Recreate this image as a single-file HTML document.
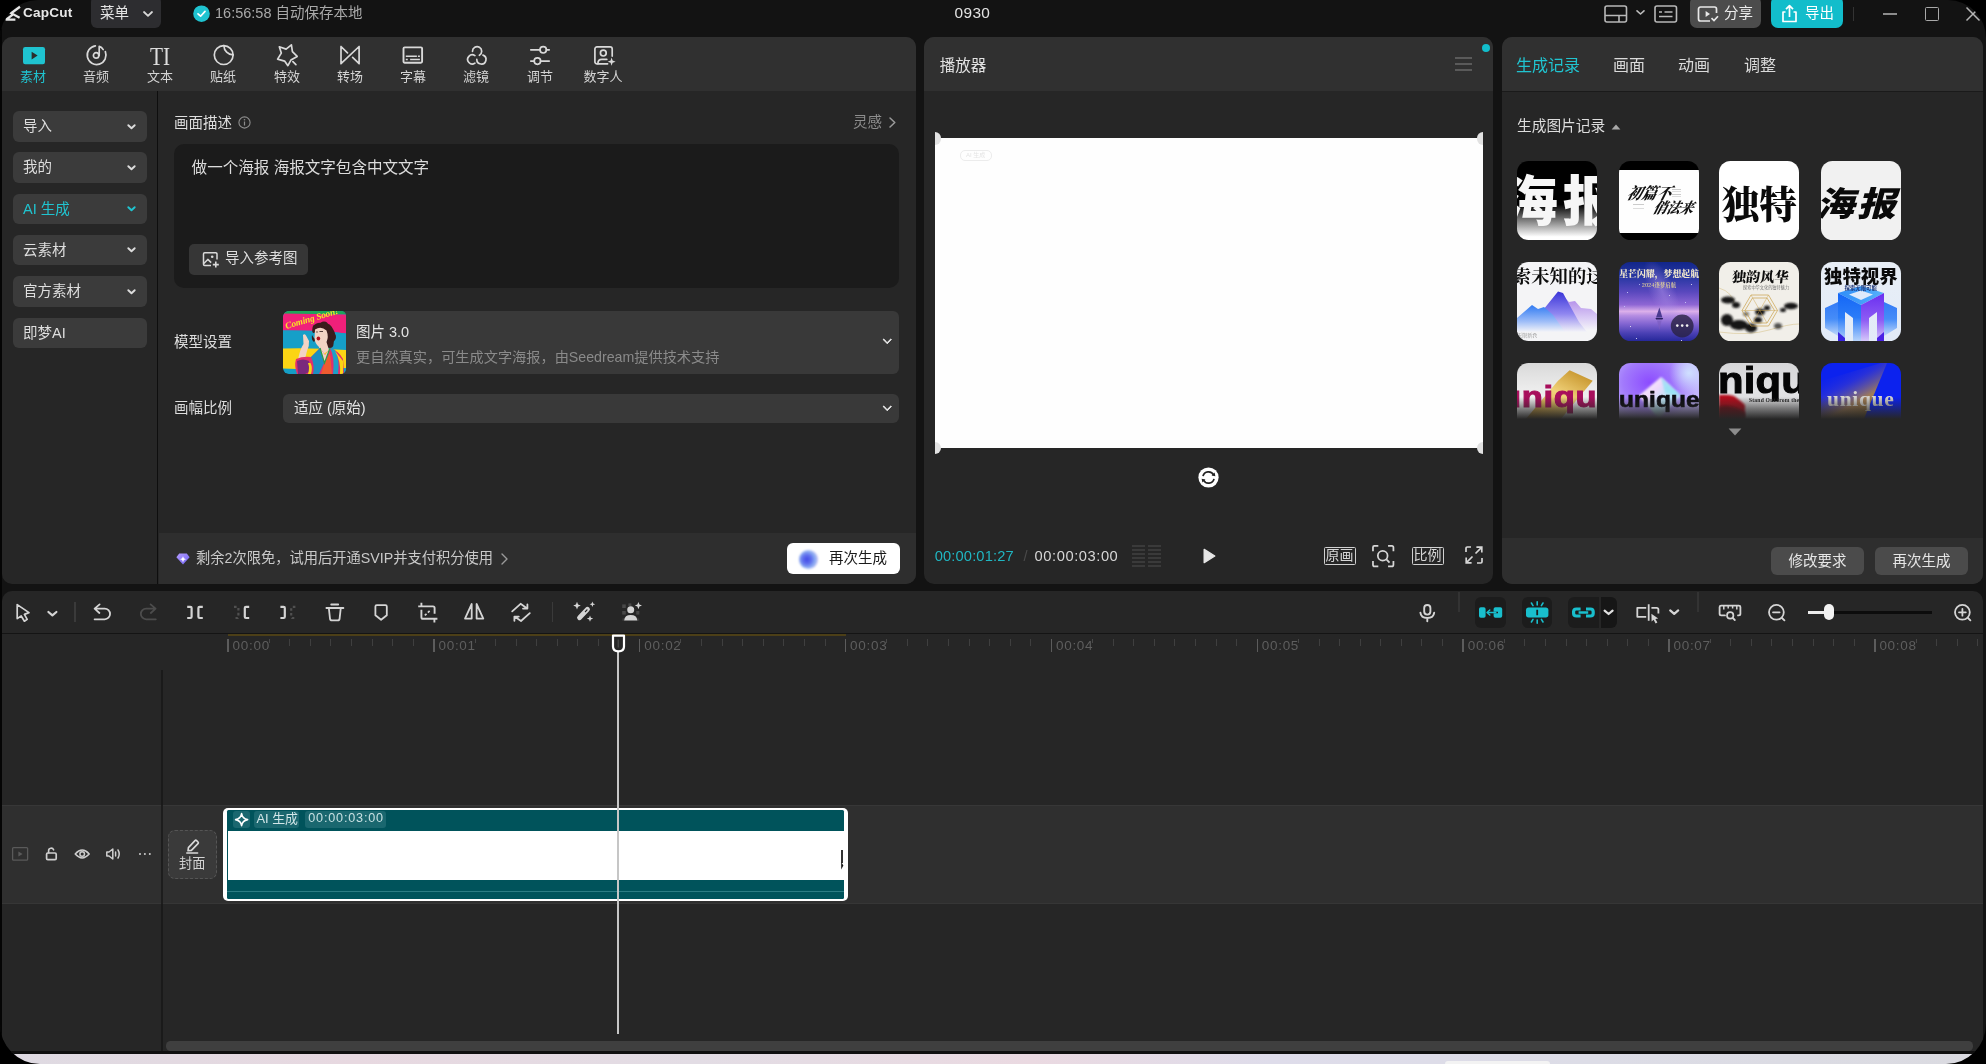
<!DOCTYPE html>
<html lang="zh-CN">
<head>
<meta charset="utf-8">
<title>CapCut</title>
<style>
*{box-sizing:border-box;margin:0;padding:0}
html,body{width:1986px;height:1064px;background:#fff;overflow:hidden}
body{font-family:"Liberation Sans","Noto Sans CJK SC",sans-serif;color:#dcdcdc;font-size:14px;-webkit-font-smoothing:antialiased}
#app{opacity:0.999;position:absolute;left:0;top:0;width:1986px;height:1064px;background:#000;overflow:hidden}
#win{position:absolute;left:0;top:0;width:1986px;height:1064px;background:#131313;border-radius:38px 38px 40px 40px;overflow:hidden}
.abs{position:absolute}
.t{position:absolute;white-space:nowrap;line-height:1}
svg{position:absolute;overflow:visible}
.panel{position:absolute;background:#262626;border-radius:10px;overflow:hidden}
.phead{position:absolute;left:0;top:-1px;right:0;height:54px;background:#303030}
.in{position:absolute;left:0;top:1px;width:100%;height:100%}
.teal{color:#20c4d0}

.tab{position:absolute;top:0;width:0;height:53px}
.tab span{position:absolute;left:-30px;width:60px;text-align:center;top:32px;font-size:13px;line-height:14px;color:#d4d4d4;white-space:nowrap}
.tab span.teal{color:#20c4d0}
.sb{position:absolute;left:11px;width:134px;height:30.6px;background:#3b3b3b;border-radius:6px;font-size:14.5px;line-height:30px;padding-left:10px;color:#dedede;white-space:nowrap}
.sb.teal{color:#20c4d0}
.sb i{position:absolute;right:13.2px;top:10.6px;width:5.4px;height:5.4px;border-right:2px solid #dadada;border-bottom:2px solid #dadada;transform:rotate(45deg);border-radius:0.5px}

.chev{position:absolute;width:6.5px;height:6.5px;border-right:2px solid #e0e0e0;border-bottom:2px solid #e0e0e0;transform:rotate(45deg);border-radius:0.5px}

.hd{width:12.4px;height:12.4px;background:#e2e2e2;border-radius:50%}
.bx{width:32px;height:18.6px;border:1.6px solid #d0d0d0;border-radius:1.5px;font-size:14px;line-height:15px;text-align:center;color:#d6d6d6;white-space:nowrap;letter-spacing:0}
.gb{width:93px;height:28px;background:#4b4b4b;border-radius:6px;font-size:14.5px;line-height:28px;text-align:center;color:#e6e6e6;white-space:nowrap}

.th{position:absolute;width:80.2px;height:79.4px;border-radius:11.5px;overflow:hidden}
.th.r3{height:57px;border-radius:11.5px 11.5px 0 0}
.th.r3::after{content:"";position:absolute;left:0;top:34px;width:100%;height:23px;background:linear-gradient(180deg,rgba(38,38,38,0) 0%,rgba(38,38,38,0.55) 50%,#262626 96%)}
/* sections get appended below */
</style>
</head>
<body>
<div id="app"><div id="win">
<!--TITLEBAR-->
<div class="abs" style="left:0;top:0;width:2px;height:1064px;background:#050505"></div>
<!-- title bar -->
<svg style="left:5px;top:6px" width="16" height="15" viewBox="0 0 16 15"><path d="M15 0.8 L6.2 7.2 L14.6 11.8 M0.6 13.7 L10.4 13.7 M1.4 13.4 L7.4 8.8" fill="none" stroke="#e6e6e6" stroke-width="2.3" stroke-linejoin="miter"/></svg>
<div class="t" style="left:23px;top:5.8px;font-size:13.6px;font-weight:700;color:#e8e8e8;letter-spacing:0.2px">CapCut</div>
<div class="abs" style="left:91px;top:-4px;width:70px;height:32px;background:#2d2d30;border-radius:6px"></div>
<div class="t" style="left:100px;top:6px;font-size:14.5px;color:#e4e4e4">菜单</div>
<svg style="left:143px;top:11px" width="10" height="6" viewBox="0 0 10 6"><path d="M1 1 L5 4.8 L9 1" fill="none" stroke="#d8d8d8" stroke-width="1.8" stroke-linecap="round" stroke-linejoin="round"/></svg>
<svg style="left:193px;top:5px" width="17" height="17" viewBox="0 0 17 17"><circle cx="8.5" cy="8.7" r="8.3" fill="#1fc3d0"/><path d="M5 8.8 L7.6 11.2 L12 6.4" fill="none" stroke="#fff" stroke-width="1.7" stroke-linecap="round" stroke-linejoin="round"/></svg>
<div class="t" style="left:215px;top:6px;font-size:14.5px;color:#a9a9a9">16:56:58 自动保存本地</div>
<div class="t" style="left:954.6px;top:5px;font-size:15.4px;color:#e2e2e2;letter-spacing:0.35px">0930</div>
<!-- right icons -->
<svg style="left:1604px;top:5px" width="24" height="18" viewBox="0 0 24 18"><rect x="1" y="1" width="21.5" height="16" rx="2" fill="none" stroke="#b8b8b8" stroke-width="1.6"/><path d="M1 10.5 H22.5 M15 10.5 V17" stroke="#b8b8b8" stroke-width="1.6" fill="none"/></svg>
<svg style="left:1636px;top:10px" width="9" height="5" viewBox="0 0 9 5"><path d="M1 0.8 L4.5 4 L8 0.8" fill="none" stroke="#bdbdbd" stroke-width="1.6" stroke-linecap="round" stroke-linejoin="round"/></svg>
<svg style="left:1654px;top:5px" width="24" height="18" viewBox="0 0 24 18"><rect x="1" y="1" width="21.5" height="16" rx="2" fill="none" stroke="#b8b8b8" stroke-width="1.6"/><path d="M5 7 H8 M10.5 7 H18.5 M5 11.5 H18.5" stroke="#b8b8b8" stroke-width="1.6" fill="none"/></svg>
<div class="abs" style="left:1690px;top:-4px;width:71px;height:32px;background:#4c4c4c;border-radius:7px"></div>
<svg style="left:1697px;top:5px" width="22" height="18" viewBox="0 0 22 18"><path d="M13 16 H3.5 a2 2 0 0 1 -2 -2 V4 a2 2 0 0 1 2 -2 H17.5 a2 2 0 0 1 2 2 V8" fill="none" stroke="#e8e8e8" stroke-width="1.7"/><path d="M8.6 6 L13 9 L8.6 12 Z" fill="#e8e8e8"/><path d="M14.5 13.2 L17 15.6 L21 11.2" fill="none" stroke="#e8e8e8" stroke-width="1.7"/></svg>
<div class="t" style="left:1724px;top:6px;font-size:14.5px;color:#ededed">分享</div>
<div class="abs" style="left:1771px;top:-4px;width:72px;height:32px;background:#12bdcb;border-radius:7px"></div>
<svg style="left:1781px;top:4px" width="17" height="19" viewBox="0 0 17 19"><path d="M4.5 8 H2 V17.5 H15 V8 H12.5" fill="none" stroke="#fff" stroke-width="1.7" stroke-linejoin="round"/><path d="M8.5 13 V2 M5 5.2 L8.5 1.6 L12 5.2" fill="none" stroke="#fff" stroke-width="1.7" stroke-linejoin="round"/></svg>
<div class="t" style="left:1805px;top:6px;font-size:14.5px;color:#fff">导出</div>
<div class="abs" style="left:1853px;top:7px;width:1px;height:14px;background:#333"></div>
<div class="abs" style="left:1883.4px;top:13px;width:14px;height:2px;background:#8c8c8c"></div>
<div class="abs" style="left:1925px;top:7px;width:14px;height:14px;border:1.8px solid #a9a9a9;border-radius:1.5px"></div>
<svg style="left:1966px;top:7px" width="14" height="14" viewBox="0 0 14 14"><path d="M0.5 0.5 L13.5 13.5 M13.5 0.5 L0.5 13.5" stroke="#b5b5b5" stroke-width="1.5"/></svg>
<!--/TITLEBAR-->
<!--LEFTPANEL-->
<div class="panel" id="lp" style="left:2px;top:37px;width:913.6px;height:547.4px"><div class="in">
 <div class="phead"></div>
 <!-- tabs -->
 <div class="tab" style="left:31px"><svg width="24" height="19" viewBox="0 0 24 19" style="left:-11px;top:8px"><rect x="1" y="1" width="22" height="17.2" rx="2.2" fill="#1fc3d0"/><path d="M9.6 5.8 L15.6 9.6 L9.6 13.4 Z" fill="#2b2b2b"/></svg><span class="teal">素材</span></div>
 <div class="tab" style="left:94px"><svg width="22" height="22" viewBox="0 0 22 22" style="left:-11px;top:6px"><path d="M10.35 1.8 A9.4 9.4 0 1 0 20.35 7.6" fill="none" stroke="#d9d9d9" stroke-width="1.7" stroke-linecap="round" stroke-linejoin="round"/><circle cx="11.1" cy="11.4" r="2.7" fill="none" stroke="#d9d9d9" stroke-width="1.7" stroke-linecap="round" stroke-linejoin="round"/><path d="M14.2 11.4 V2.4 Q16.8 3.2 18.2 5.6" fill="none" stroke="#d9d9d9" stroke-width="1.7" stroke-linecap="round" stroke-linejoin="round" stroke-width="1.9"/></svg><span>音频</span></div>
 <div class="tab" style="left:158px"><div class="t" style="left:-13px;top:6.5px;width:26px;text-align:center;font-family:'Liberation Serif',serif;font-size:24.5px;color:#dedede;transform:scaleX(0.87)">TI</div><span>文本</span></div>
 <div class="tab" style="left:221px"><svg width="22" height="22" viewBox="0 0 22 22" style="left:-11px;top:6px"><circle cx="11.7" cy="11.1" r="9.4" fill="none" stroke="#d9d9d9" stroke-width="1.7" stroke-linecap="round" stroke-linejoin="round"/><path d="M11.9 1.7 A9.4 9.4 0 0 0 21.1 10.9" fill="none" stroke="#d9d9d9" stroke-width="1.7" stroke-linecap="round" stroke-linejoin="round"/></svg><span>贴纸</span></div>
 <div class="tab" style="left:285px"><svg width="24" height="25" viewBox="0 0 24 25" style="left:-12px;top:4px"><path d="M16.4 2.8 L17.4 9.6 L22.2 14.4 L15.9 18.1 L12.9 23.7 L9.6 19.1 L2.6 17.1 L6.3 11.1 L4.3 4.8 L11.1 7.1 Z" fill="none" stroke="#d9d9d9" stroke-width="1.7" stroke-linecap="round" stroke-linejoin="round"/><path d="M17.9 19.7 L20.9 22.7" fill="none" stroke="#d9d9d9" stroke-width="1.7" stroke-linecap="round" stroke-linejoin="round"/></svg><span>特效</span></div>
 <div class="tab" style="left:348px"><svg width="22" height="20" viewBox="0 0 22 20" style="left:-11px;top:7px"><path d="M2 1.5 V18.7 L20.1 1.5 V18.7 L13.6 12.4 M2 1.5 L8.5 7.8" fill="none" stroke="#d9d9d9" stroke-width="1.7" stroke-linecap="round" stroke-linejoin="round" stroke-linecap="butt"/></svg><span>转场</span></div>
 <div class="tab" style="left:411px"><svg width="22" height="19" viewBox="0 0 22 19" style="left:-11px;top:8px"><rect x="1.5" y="1.4" width="18.6" height="15.4" rx="1.2" fill="none" stroke="#d9d9d9" stroke-width="1.9"/><path d="M3.8 10.2 H14.9 M15.9 10.2 H17.9 M3.8 13.4 H5.8 M8.1 13.4 H17.9" stroke="#d9d9d9" stroke-width="1.5"/></svg><span>字幕</span></div>
 <div class="tab" style="left:474px"><svg width="24" height="22" viewBox="0 0 24 22" style="left:-11px;top:6px"><path d="M7.5 7.3 A4.6 4.6 0 1 1 14.4 11.3 M9.94 11.63 A4.6 4.6 0 1 0 9.94 19.17 M11.8 15.4 A4.6 4.6 0 1 0 17.97 11.08" fill="none" stroke="#d9d9d9" stroke-width="1.7" stroke-linecap="round" stroke-linejoin="round"/></svg><span>滤镜</span></div>
 <div class="tab" style="left:538px"><svg width="20" height="21" viewBox="0 0 20 21" style="left:-10px;top:7px"><path d="M0.8 4.8 H10 M16.4 4.8 H19.2 M0.8 16.1 H4.2 M10.6 16.1 H19.2" fill="none" stroke="#d9d9d9" stroke-width="1.7" stroke-linecap="round" stroke-linejoin="round"/><circle cx="13.2" cy="4.8" r="3.2" fill="none" stroke="#d9d9d9" stroke-width="1.7" stroke-linecap="round" stroke-linejoin="round"/><circle cx="7.4" cy="16.1" r="3.2" fill="none" stroke="#d9d9d9" stroke-width="1.7" stroke-linecap="round" stroke-linejoin="round"/></svg><span>调节</span></div>
 <div class="tab" style="left:601px"><svg width="25" height="22" viewBox="0 0 25 22" style="left:-12px;top:6px"><path d="M16.6 19.8 H6 a2.1 2.1 0 0 1 -2.1 -2.1 V5 a2.1 2.1 0 0 1 2.1 -2.1 H19.1 a2.1 2.1 0 0 1 2.1 2.1 V12.1" fill="none" stroke="#d9d9d9" stroke-width="1.7" stroke-linecap="round" stroke-linejoin="round" stroke-linecap="butt" stroke-width="1.9"/><circle cx="12.3" cy="9.1" r="2.9" fill="none" stroke="#d9d9d9" stroke-width="1.7" stroke-linecap="round" stroke-linejoin="round"/><path d="M6.9 19.6 Q6.9 15.4 10.8 15.4 H15.8" fill="none" stroke="#d9d9d9" stroke-width="1.7" stroke-linecap="round" stroke-linejoin="round" stroke-linecap="butt"/><path d="M20.6 13.6 L21.6 16.6 L24.6 17.65 L21.6 18.7 L20.6 21.7 L19.6 18.7 L16.6 17.65 L19.6 16.6 Z" fill="#d9d9d9"/></svg><span>数字人</span></div>
 <!-- sidebar -->
 <div class="abs" style="left:154.8px;top:53px;width:1.3px;height:494px;background:#0e0e0e"></div>
 <div class="sb" style="top:73.0px">导入<svg width="9" height="6" viewBox="0 0 9 6" style="left:113.6px;top:12.6px"><path d="M1.3 1.2 L4.5 4.3 L7.7 1.2" fill="none" stroke="#dcdcdc" stroke-width="1.9" stroke-linecap="round" stroke-linejoin="round"/></svg></div>
 <div class="sb" style="top:114.3px">我的<svg width="9" height="6" viewBox="0 0 9 6" style="left:113.6px;top:12.6px"><path d="M1.3 1.2 L4.5 4.3 L7.7 1.2" fill="none" stroke="#dcdcdc" stroke-width="1.9" stroke-linecap="round" stroke-linejoin="round"/></svg></div>
 <div class="sb teal" style="top:155.6px">AI 生成<svg width="9" height="6" viewBox="0 0 9 6" style="left:113.6px;top:12.6px"><path d="M1.3 1.2 L4.5 4.3 L7.7 1.2" fill="none" stroke="#20c4d0" stroke-width="1.9" stroke-linecap="round" stroke-linejoin="round"/></svg></div>
 <div class="sb" style="top:196.9px">云素材<svg width="9" height="6" viewBox="0 0 9 6" style="left:113.6px;top:12.6px"><path d="M1.3 1.2 L4.5 4.3 L7.7 1.2" fill="none" stroke="#dcdcdc" stroke-width="1.9" stroke-linecap="round" stroke-linejoin="round"/></svg></div>
 <div class="sb" style="top:238.2px">官方素材<svg width="9" height="6" viewBox="0 0 9 6" style="left:113.6px;top:12.6px"><path d="M1.3 1.2 L4.5 4.3 L7.7 1.2" fill="none" stroke="#dcdcdc" stroke-width="1.9" stroke-linecap="round" stroke-linejoin="round"/></svg></div>
 <div class="sb" style="top:279.6px">即梦AI</div>
 <!--LEFTMAIN-->
 <div class="t" style="left:172px;top:77.7px;font-size:14.5px;color:#dedede">画面描述</div>
 <svg style="left:236px;top:78px" width="13" height="13" viewBox="0 0 13 13"><circle cx="6.5" cy="6.5" r="5.6" fill="none" stroke="#8c8c8c" stroke-width="1.1"/><path d="M6.5 5.6 V9.6" stroke="#8c8c8c" stroke-width="1.2"/><circle cx="6.5" cy="3.7" r="0.8" fill="#8c8c8c"/></svg>
 <div class="t" style="left:851px;top:77px;font-size:14.5px;color:#8e8e8e">灵感</div>
 <svg style="left:887px;top:79px" width="7" height="11" viewBox="0 0 7 11"><path d="M1 1 L5.8 5.5 L1 10" fill="none" stroke="#9a9a9a" stroke-width="1.5" stroke-linecap="round" stroke-linejoin="round"/></svg>
 <div class="abs" style="left:172px;top:105.6px;width:725px;height:144.2px;background:#1b1b1b;border-radius:10px"></div>
 <div class="t" style="left:189.6px;top:121.9px;font-size:15.55px;color:#dcdcdc">做一个海报 海报文字包含中文文字</div>
 <div class="abs" style="left:187px;top:206.2px;width:119px;height:30.6px;background:#363636;border-radius:5px"></div>
 <svg style="left:200px;top:213px" width="18" height="17" viewBox="0 0 18 17"><path d="M15 8.5 V3 a1.2 1.2 0 0 0 -1.2 -1.2 H2.7 a1.2 1.2 0 0 0 -1.2 1.2 V13.3 a1.2 1.2 0 0 0 1.2 1.2 H9" fill="none" stroke="#d9d9d9" stroke-width="1.5"/><path d="M1.8 12.6 L5.8 8.4 L9.2 11.6" fill="none" stroke="#d9d9d9" stroke-width="1.5" stroke-linejoin="round"/><circle cx="10.2" cy="5.8" r="1.3" fill="#d9d9d9"/><path d="M13.8 10.6 V16.6 M10.8 13.6 H16.8" stroke="#d9d9d9" stroke-width="1.6"/></svg>
 <div class="t" style="left:223px;top:213px;font-size:14.5px;color:#dedede">导入参考图</div>
 <!-- model -->
 <div class="t" style="left:172px;top:297px;font-size:14.5px;color:#dedede">模型设置</div>
 <div class="abs" style="left:281px;top:273px;width:616px;height:62.6px;background:#393939;border-radius:6px;overflow:hidden">
  <!--MODELTHUMB-->
  <div class="abs" style="left:0;top:0;width:63px;height:63px;border-radius:5px;overflow:hidden;background:#159ec6">
   <svg width="63" height="63" viewBox="0 0 63 63" style="left:0;top:0">
    <rect width="63" height="3.5" fill="#1ea55a"/>
    <path d="M0 2.5 L63 3.4 V22.5 Q40 19 0 19.5 Z" fill="#f0207a"/>
    <path d="M0 19.5 Q40 19 63 22.5 V39 Q30 36.5 0 37.4 Z" fill="#169fc8"/>
    <path d="M0 37.4 Q30 36.5 63 39 V57 Q30 59 0 57.4 Z" fill="#fbd414"/>
    <!-- hair -->
    <path d="M30 16 Q33 10.5 40 12 Q47 11 50 18 Q54 24 51 30 Q50 36 45 36 L44 28 Q38 16 31 22 Q28 22 30 16 Z" fill="#3a1c1c"/>
    <path d="M29 24 Q30 27 33 28 L31 31 Q28 29 29 24 Z" fill="#3a1c1c"/><circle cx="48" cy="26" r="5" fill="#3a1c1c"/><circle cx="46.5" cy="33" r="4" fill="#3a1c1c"/><circle cx="33" cy="17" r="3.4" fill="#3a1c1c"/><circle cx="41" cy="14.5" r="4" fill="#3a1c1c"/>
    <!-- face/neck -->
    <path d="M32 18.5 Q38 14.5 43.5 19.5 Q46 26 43.5 31 L46 39 L38 45 L36 36 Q32 33 31.5 27 Z" fill="#f2d3c4"/>
    <ellipse cx="35.4" cy="27.4" rx="1.8" ry="2" fill="#b0101e"/>
    <path d="M36.5 20.5 H40 M33.2 21 H34.8" stroke="#2a1616" stroke-width="0.8"/>
    <!-- arm + hand -->
    <path d="M20 24 Q21.5 22.5 23 24.5 L26 30 Q26.5 35 24 40 L21.5 50 L15 49 Q17 38 20.5 33 Z" fill="#f2d3c4"/>
    <!-- dress -->
    <path d="M13 48 Q20 45 28 46 L37 37 L42 44 L47 37 Q56 40 60 48 L61 63 H14 Q11 55 13 48 Z" fill="#e2306c"/>
    <path d="M37 37 L41.5 52 L47 37 L42 44 Z" fill="#f2d3c4"/>
    <path d="M28 46 L37 37 L41 52 L36 63 H30 Q32 54 28 46 Z" fill="#1c8fc0"/>
    <path d="M47 37 Q52 46 50 63 H55 Q57 48 52 39 Z" fill="#1ea0c8"/>
    <path d="M14 50 Q20 47 26 50 L28 60 L22 63 H15 Z" fill="#7a2a7c"/>
    <path d="M25 52 Q27 57 25 63 H28 Q30 57 27.5 52 Z M52 40 Q58 50 57 63 H60 L60 50 Z" fill="#fbd414"/>
    <path d="M41.5 52 L47 42 L49 63 H38 Z" fill="#f0602a" opacity="0.9"/>
    <path d="M37 37 L41.5 52 L47 37" fill="none" stroke="#2aa04a" stroke-width="1.2"/>
   </svg>
   <div class="t" style="left:3.5px;top:10.6px;font-size:9.3px;font-weight:700;font-style:italic;color:#f7e326;font-family:'Liberation Serif',serif;letter-spacing:-0.1px;transform:rotate(-16.5deg);transform-origin:0 100%">Coming Soon!</div>
  </div>
  <!--/MODELTHUMB-->
 </div>
 <div class="t" style="left:354px;top:287px;font-size:14.5px;color:#e4e4e4">图片 3.0</div>
 <div class="t" style="left:354px;top:312px;font-size:14.2px;color:#8a8a8a">更自然真实，可生成文字海报，由Seedream提供技术支持</div>
 <i class="chev" style="left:882px;top:298px"></i>
 <div class="t" style="left:172px;top:363px;font-size:14.5px;color:#dedede">画幅比例</div>
 <div class="abs" style="left:281px;top:355.6px;width:616px;height:29px;background:#393939;border-radius:6px"></div>
 <div class="t" style="left:292px;top:363px;font-size:14.5px;color:#e4e4e4">适应 (原始)</div>
 <i class="chev" style="left:882px;top:365.4px"></i>
 <!-- bottom bar -->
 <div class="abs" style="left:156.5px;top:494.6px;width:758px;height:53px;background:#2e2e2e"></div>
 <svg style="left:174px;top:515px" width="14" height="12" viewBox="0 0 14 12"><defs><linearGradient id="dg" x1="0" y1="0" x2="1" y2="1"><stop offset="0" stop-color="#b49cff"/><stop offset="1" stop-color="#6f63f2"/></linearGradient></defs><path d="M3.2 0.6 H10.8 L13.6 4.2 L7 11.4 L0.4 4.2 Z" fill="url(#dg)"/><path d="M7 3.2 L7.9 5.3 L10 6.2 L7.9 7.1 L7 9.2 L6.1 7.1 L4 6.2 L6.1 5.3 Z" fill="#fff"/></svg>
 <div class="t" style="left:194px;top:513px;font-size:14.25px;color:#c9c9c9">剩余2次限免，试用后开通SVIP并支付积分使用</div>
 <svg style="left:499px;top:515px" width="7" height="12" viewBox="0 0 7 12"><path d="M1 1 L6 6 L1 11" fill="none" stroke="#9a9a9a" stroke-width="1.4" stroke-linecap="round" stroke-linejoin="round"/></svg>
 <div class="abs" style="left:785px;top:504.8px;width:112.6px;height:31px;background:#fff;border-radius:6px"></div>
 <div class="abs" style="left:796.5px;top:511.5px;width:19px;height:19px;border-radius:50%;background:radial-gradient(circle at 42% 50%,#4048e6 0%,#6272ee 32%,#8fb2f2 58%,#cdb9f4 80%,rgba(255,255,255,0) 100%);filter:blur(0.8px)"></div>
 <div class="t" style="left:827px;top:513px;font-size:14.5px;color:#1a1a1a">再次生成</div>
 <!--/LEFTMAIN-->
</div></div>
<!--/LEFTPANEL-->
<!--PLAYER-->
<div class="panel" id="pp" style="left:923.8px;top:37px;width:569.7px;height:547.4px"><div class="in">
 <div class="phead"></div>
 <div class="t" style="left:16px;top:20px;font-size:15.5px;color:#e2e2e2">播放器</div>
 <div class="abs" style="left:531px;top:19px;width:17px;height:2px;background:#5a5a5a;box-shadow:0 6px 0 #5a5a5a,0 12px 0 #5a5a5a"></div>
 <div class="abs" style="left:558.3px;top:5.8px;width:8px;height:8px;border-radius:50%;background:#12bdcb"></div>
 <!-- canvas -->
 <div class="abs" style="left:10.9px;top:94.2px;width:548.5px;height:321.9px;overflow:hidden">
  <div class="abs" style="left:0;top:6.2px;width:548.5px;height:309.5px;background:#fefefe"></div>
  <div class="abs hd" style="left:-6.2px;top:0"></div><div class="abs hd" style="left:542.3px;top:0"></div>
  <div class="abs hd" style="left:-6.2px;top:309.5px"></div><div class="abs hd" style="left:542.3px;top:309.5px"></div>
  <div class="abs" style="left:25px;top:17.5px;width:32px;height:11px;border:1px solid #ececec;border-radius:5px;font-size:6px;line-height:8px;color:#e4e4e4;text-align:center">AI 生成</div>
 </div>
 <svg style="left:274.4px;top:428.8px" width="21" height="21" viewBox="0 0 22 22"><circle cx="11" cy="11" r="10.6" fill="#fff"/><path d="M5.2 9.6 A6 6 0 0 1 16.4 8.4 M16.8 12.4 A6 6 0 0 1 5.6 13.6" fill="none" stroke="#222" stroke-width="1.8"/><path d="M14.2 8.8 L18.2 9.6 L17.4 5.8 Z M7.8 13.2 L3.8 12.4 L4.6 16.2 Z" fill="#222"/></svg>
 <!-- controls -->
 <div class="t" style="left:11px;top:511px;font-size:14.7px;color:#20b6c2;letter-spacing:0.12px">00:00:01:27</div>
 <div class="t" style="left:99.6px;top:511px;font-size:14.7px;color:#4a4a4a">/</div>
 <div class="t" style="left:110.8px;top:511px;font-size:14.7px;color:#d6d6d6;letter-spacing:0.56px">00:00:03:00</div>
 <div class="abs" style="left:208px;top:507px;width:13px;height:2px;background:#3a3a3a;box-shadow:0 4px 0 #3a3a3a,0 8px 0 #3a3a3a,0 12px 0 #3a3a3a,0 16px 0 #3a3a3a,0 20px 0 #3a3a3a,16px 0 0 #3a3a3a,16px 4px 0 #3a3a3a,16px 8px 0 #3a3a3a,16px 12px 0 #3a3a3a,16px 16px 0 #3a3a3a,16px 20px 0 #3a3a3a"></div>
 <svg style="left:279.2px;top:510.4px" width="13" height="16" viewBox="0 0 13 16"><path d="M1.2 1.4 L11.8 8 L1.2 14.6 Z" fill="#e6e6e6" stroke="#e6e6e6" stroke-width="1.4" stroke-linejoin="round"/></svg>
 <div class="abs bx" style="left:399.8px;top:508.6px">原画</div>
 <svg style="left:448.6px;top:506.6px" width="22.4" height="22.4" viewBox="0 0 23 23"><path d="M1 6.5 V2.4 a1.4 1.4 0 0 1 1.4 -1.4 H6.5 M16.5 1 H20.6 a1.4 1.4 0 0 1 1.4 1.4 V6.5 M22 16.5 V20.6 a1.4 1.4 0 0 1 -1.4 1.4 H16.5 M6.5 22 H2.4 a1.4 1.4 0 0 1 -1.4 -1.4 V16.5" fill="none" stroke="#d6d6d6" stroke-width="1.8"/><circle cx="11" cy="11" r="5" fill="none" stroke="#d6d6d6" stroke-width="1.8"/><path d="M14.8 14.8 L18 18" stroke="#d6d6d6" stroke-width="1.8"/></svg>
 <div class="abs bx" style="left:487.8px;top:508.6px">比例</div>
 <svg style="left:541px;top:508px" width="18" height="18" viewBox="0 0 18 18"><path d="M1 6 V2.2 a1.2 1.2 0 0 1 1.2 -1.2 H6 M12 17 H15.8 a1.2 1.2 0 0 0 1.2 -1.2 V12" fill="none" stroke="#d6d6d6" stroke-width="1.7"/><path d="M10.5 7.5 L16.6 1.4 M11.4 1.2 H16.8 V6.6 M7.5 10.5 L1.4 16.6 M1.2 11.4 V16.8 H6.6" fill="none" stroke="#d6d6d6" stroke-width="1.7"/></svg>
</div></div>
<!--/PLAYER-->
<!--RIGHTPANEL-->
<div class="panel" id="rp" style="left:1502px;top:37px;width:481px;height:547.4px"><div class="in">
 <div class="phead" style="height:55.2px;border-bottom:1.5px solid #1a1a1a"></div>
 <div class="t teal" style="left:14px;top:19.6px;font-size:16px">生成记录</div>
 <div class="t" style="left:111px;top:19.6px;font-size:16px;color:#dadada">画面</div>
 <div class="t" style="left:176px;top:19.6px;font-size:16px;color:#dadada">动画</div>
 <div class="t" style="left:242px;top:19.6px;font-size:16px;color:#dadada">调整</div>
 <div class="t" style="left:15px;top:80.8px;font-size:14.7px;color:#dedede">生成图片记录</div>
 <svg style="left:109px;top:86px" width="10" height="6" viewBox="0 0 10 6"><path d="M5 0.6 L9.4 5.4 H0.6 Z" fill="#a8a8a8"/></svg>
 <svg style="left:226px;top:390px" width="14" height="8" viewBox="0 0 14 8"><path d="M0.6 0.6 H13.4 L7 7.6 Z" fill="#8c8c8c"/></svg>
 <!--THUMBS-->
 <!-- row 1 -->
 <div class="th" style="left:15.3px;top:123px;background:linear-gradient(180deg,#000 0%,#000 55%,#fff 96%)"><div class="t" style="left:-13.5px;top:10px;font-size:54px;font-weight:900;color:#f6f6f6;letter-spacing:5px;font-family:'Noto Sans CJK SC',sans-serif">海报</div></div>
 <div class="th" style="left:116.7px;top:123px;background:#000"><div class="abs" style="left:0;top:8.5px;width:80px;height:63.5px;background:#fefefe"></div>
  <div class="t" style="left:9.5px;top:23.5px;font-size:14.5px;font-weight:900;font-style:italic;color:#111;font-family:'Noto Serif CJK SC',serif;transform:skewX(-16deg) scaleY(1.12)">初篇不</div>
  <div class="t" style="left:35px;top:38.5px;font-size:13.4px;font-weight:900;font-style:italic;color:#111;font-family:'Noto Serif CJK SC',serif;transform:skewX(-16deg) scaleY(1.1)">俏法来</div>
  <div class="abs" style="left:53px;top:28px;width:9px;height:1px;background:#ccc;box-shadow:0 2px 0 #ddd,0 5px 0 #ccc,0 7px 0 #ddd"></div>
  <div class="abs" style="left:14px;top:43px;width:11px;height:1px;background:#ccc;box-shadow:0 4px 0 #ddd"></div>
 </div>
 <div class="th" style="left:217px;top:123px;background:#fff"><div class="t" style="left:2.8px;top:22.6px;font-size:37.5px;font-weight:900;color:#0a0a0a;font-family:'Noto Serif CJK SC',serif">独特</div></div>
 <div class="th" style="left:318.5px;top:123px;background:#f1f1f1"><div class="t" style="left:-0.5px;top:21px;font-size:38.5px;font-weight:900;color:#0a0a0a;letter-spacing:2.6px;font-family:'Noto Sans CJK SC',sans-serif;transform:skewX(-15deg) scaleY(0.88)">海报</div></div>
 <!-- row 2 -->
 <div class="th" style="left:15.3px;top:223.5px;background:#f4f4f6">
  <svg width="80" height="80" viewBox="0 0 80 80" style="left:0;top:0"><defs>
   <linearGradient id="m1" x1="0" y1="0" x2="0" y2="1"><stop offset="0" stop-color="#3a35d8"/><stop offset="0.55" stop-color="#8f86f0"/><stop offset="1" stop-color="#f4f4f8"/></linearGradient>
   <linearGradient id="m2" x1="0" y1="0" x2="0" y2="1"><stop offset="0" stop-color="#2f7af2"/><stop offset="0.6" stop-color="#9cbcf8"/><stop offset="1" stop-color="#f4f4f8"/></linearGradient>
   <linearGradient id="m3" x1="0" y1="0" x2="0" y2="1"><stop offset="0" stop-color="#a87de6"/><stop offset="0.7" stop-color="#ddd0f6"/><stop offset="1" stop-color="#f4f4f8"/></linearGradient></defs>
   <path d="M44 32 L52 40 L58 39 L64 46 L74 47 L80 52 V68 H40 Z" fill="url(#m3)"/>
   <path d="M18 58 L41 29.5 L46 31 L52 42 L62 60 L70 70 H10 Z" fill="url(#m1)"/>
   <path d="M0 56 L15 43 L21 47 L27 45 L36 53 L48 70 H0 Z" fill="url(#m2)"/>
  </svg>
  <div class="t" style="left:-4.5px;top:4px;font-size:18.3px;font-weight:700;color:#0c0c0c;letter-spacing:0.1px;font-family:'Noto Serif CJK SC',serif">索未知的这</div>
  <div class="t" style="left:0px;top:70px;font-size:5px;color:#999;font-family:'Noto Serif CJK SC',serif">无限新我</div>
 </div>
 <div class="th" style="left:116.7px;top:223.5px;background:linear-gradient(180deg,#12268a 0%,#2a38a4 20%,#5a48be 38%,#8e66d4 54%,#dcb0ea 62.5%,#b48ce2 68%,#8466d2 78%,#4a40b4 90%,#26289a 100%)">
  <div class="abs" style="left:30px;top:-6px;width:26px;height:70px;background:radial-gradient(ellipse at center,rgba(170,140,230,0.55) 0%,rgba(150,120,220,0) 70%);transform:rotate(-24deg)"></div>
  <div class="abs" style="left:0;top:0;width:1px;height:1px;background:#fff;border-radius:50%;box-shadow:8px 30px 0 #dfe4ff,20px 22px 0 #c8d0ff,72px 22px 0 #fff,66px 40px 0 #d8dcff,11px 64px 0 #fff,17px 76px 0 #fff,62px 78px 0 #fff,63px 79px 0 #fff,5px 44px 0 #c8d0ff,50px 33px 0 #e8e8ff,35px 12px 0 #c8d0ff,60px 8px 0 #c0c8ff"></div>
  <svg width="80" height="80" viewBox="0 0 80 80" style="left:0;top:0"><path d="M40.4 45.6 L43.4 55.4 H37 Z" fill="#4a3a90"/><path d="M36.4 56 H44.2 L43.4 57.4 H37.2 Z" fill="#2a2060"/><path d="M40.4 68 L42.6 58.6 H38 Z" fill="#7a5cc0" opacity="0.7"/><circle cx="63.2" cy="64" r="11.4" fill="#2a2244" opacity="0.82"/><circle cx="58.3" cy="63.6" r="1.3" fill="#f0f0f0"/><circle cx="63.2" cy="63.6" r="1.3" fill="#f0f0f0"/><circle cx="68.1" cy="63.6" r="1.3" fill="#f0f0f0"/></svg>
  <div class="t" style="left:0.5px;top:8.5px;font-size:8.9px;font-weight:900;color:#efe6cc;font-family:'Noto Serif CJK SC',serif">星芒闪耀，梦想起航</div>
  <div class="t" style="left:23px;top:21.5px;font-size:5.4px;font-weight:700;color:#d8c89a;font-family:'Noto Serif CJK SC',serif">2024逐梦启航</div>
 </div>
 <div class="th" style="left:217px;top:223.5px;background:#f1efe9">
  <svg width="80" height="80" viewBox="0 0 80 80" style="left:0;top:0"><defs><filter id="bl"><feGaussianBlur stdDeviation="1.3"/></filter></defs>
   <path d="M0 26 Q14 30 16 44 M0 70 Q30 74 50 68 T80 62" fill="none" stroke="#d9c58f" stroke-width="0.6"/>
   <g filter="url(#bl)" fill="#161616"><ellipse cx="9" cy="38" rx="7" ry="3.4"/><ellipse cx="17" cy="43" rx="4" ry="3"/><ellipse cx="8" cy="58" rx="6" ry="6"/><ellipse cx="20" cy="63" rx="9" ry="5"/><ellipse cx="32" cy="66" rx="6" ry="4.4"/><ellipse cx="41" cy="50" rx="5" ry="3.4"/><ellipse cx="48" cy="46" rx="3" ry="2.4"/><ellipse cx="39" cy="58" rx="4" ry="3"/><ellipse cx="72" cy="44" rx="7" ry="3.2"/><ellipse cx="64" cy="48" rx="3" ry="2"/><ellipse cx="59" cy="64" rx="4" ry="3" opacity="0.7"/><ellipse cx="27" cy="52" rx="3" ry="2" opacity="0.6"/></g>
   <g fill="none" stroke="#c9a04a" stroke-width="0.7"><path d="M32 33 H49.5 L58.5 48.5 L49.5 64 H32 L23 48.5 Z"/><path d="M33.5 36 H48 L55.5 48.5 L48 61 H33.5 L26 48.5 Z"/><path d="M32 33 L48 61 M49.5 33 L33.5 61 M23 48.5 H58.5" stroke-width="0.45"/></g>
  </svg>
  <div class="t" style="left:12.5px;top:7px;font-size:14.2px;font-weight:900;color:#0d0d0d;font-family:'Noto Serif CJK SC',serif;transform:skewX(-6deg)">独韵风华</div>
  <div class="t" style="left:24px;top:24.5px;font-size:4.2px;color:#777">探索中华文化的独特魅力</div>
 </div>
 <div class="th" style="left:318.5px;top:223.5px;background:linear-gradient(180deg,#e8eef6 0%,#e2ebf8 100%)">
  <svg width="80" height="80" viewBox="0 0 80 80" style="left:0;top:0"><defs>
   <linearGradient id="c1" x1="0" y1="0" x2="0" y2="1"><stop offset="0" stop-color="#1466f6"/><stop offset="0.5" stop-color="#2a7cf8"/><stop offset="1" stop-color="#bcd6fb"/></linearGradient>
   <linearGradient id="c2" x1="0" y1="0" x2="0" y2="1"><stop offset="0" stop-color="#6a2ef0"/><stop offset="0.55" stop-color="#8d5cf4"/><stop offset="1" stop-color="#d9ccfb"/></linearGradient>
   <linearGradient id="c3" x1="0" y1="0" x2="1" y2="0"><stop offset="0" stop-color="#2e8df8"/><stop offset="1" stop-color="#57b1fb"/></linearGradient></defs>
   <path d="M4 46 L17 40 V74 L4 66 Z M76 46 L63 40 V74 L76 66 Z" fill="url(#c1)" opacity="0.85"/>
   <path d="M17 31 L40 24 L63 31 L40 43 Z" fill="url(#c3)"/>
   <path d="M28 32.5 L40 28.5 L52 32.5 L40 38 Z" fill="#dfeafb"/>
   <path d="M17 31 L40 43 V80 H32 V56 L24 50 V80 H17 Z" fill="url(#c1)"/>
   <path d="M63 31 L40 43 V80 H48 V56 L56 50 V80 H63 Z" fill="url(#c2)"/>
   <path d="M17 80 V70 L24 76 V80 Z" fill="#3a24e0"/><path d="M63 80 V70 L56 76 V80 Z" fill="#4a22e4"/>
  </svg>
  <div class="t" style="left:3.5px;top:4px;font-size:18.4px;font-weight:900;color:#0b0b0b;font-family:'Noto Sans CJK SC',sans-serif">独特视界</div>
  <div class="t" style="left:24px;top:24.5px;font-size:5.4px;font-weight:700;color:#223a7a">探索无限可能</div>
 </div>
 <!-- row 3 -->
 <div class="th r3" style="left:15.3px;top:324.8px;background:linear-gradient(180deg,#d9d9d9 0%,#ececec 45%,#f4f4f4 100%)">
  <svg width="80" height="57" viewBox="0 0 80 57" style="left:0;top:0"><defs><linearGradient id="gd" x1="0.9" y1="0" x2="0.2" y2="1"><stop offset="0" stop-color="#c18d22"/><stop offset="0.5" stop-color="#f1d27a"/><stop offset="1" stop-color="#c99a36"/></linearGradient></defs><path d="M52.6 7.2 L75.7 17.8 L43 57 H8 L40.8 18 Z" fill="url(#gd)"/></svg>
  <div class="t" style="left:-17px;top:19.3px;font-size:30px;font-weight:700;color:#a80f5c;letter-spacing:0.6px;transform:scaleX(1.15);transform-origin:0 50%;-webkit-text-stroke:1px #a80f5c">unique</div>
 </div>
 <div class="th r3" style="left:116.7px;top:324.8px;background:radial-gradient(ellipse 60% 70% at 38% 34%,#8c4cff 0%,#a27afc 55%,#c2b4fd 100%)">
  <div class="abs" style="left:50px;top:-10px;width:40px;height:40px;background:radial-gradient(circle,#cfe0ff 0%,rgba(200,215,255,0) 70%)"></div>
  <svg width="80" height="57" viewBox="0 0 80 57" style="left:0;top:0"><defs><linearGradient id="cr" x1="0" y1="0" x2="1" y2="1"><stop offset="0" stop-color="#fff"/><stop offset="0.35" stop-color="#f0d8fb"/><stop offset="0.6" stop-color="#b7e6f6"/><stop offset="1" stop-color="#c9a8f6"/></linearGradient><filter id="b2"><feGaussianBlur stdDeviation="0.9"/></filter></defs><path d="M42 14 L62 33 L40 56 L19.5 33 Z" fill="url(#cr)" filter="url(#b2)"/><path d="M42 14 L62 33 L46 30 Z" fill="#8fe3f4" opacity="0.75" filter="url(#b2)"/></svg>
  <div class="t" style="left:0px;top:26.4px;font-size:21.6px;font-weight:700;color:#0c0c12;letter-spacing:0.1px;transform:scaleX(1.13);transform-origin:0 50%;-webkit-text-stroke:0.6px #0c0c12">unique</div>
 </div>
 <div class="th r3" style="left:217px;top:324.8px;background:linear-gradient(180deg,#d6d6d8 0%,#e2e2e4 50%,#d2d2d4 100%)">
  <svg width="80" height="57" viewBox="0 0 80 57" style="left:0;top:0"><defs><filter id="b3"><feGaussianBlur stdDeviation="0.8"/></filter></defs><path d="M0 32 Q8 31 15 33 Q22 38 26 42 V57 H0 Z" fill="#b5101c" filter="url(#b3)"/><path d="M0 44 Q12 40 26 50 V57 H0 Z" fill="#7a0c14" filter="url(#b3)"/></svg>
  <div class="t" style="left:-1.5px;top:-0.6px;font-size:37px;font-weight:700;color:#050505;letter-spacing:0.2px;transform:scaleX(1.13);transform-origin:0 50%;-webkit-text-stroke:1px #050505">niqu</div>
  <div class="t" style="left:30px;top:35.5px;font-size:5.6px;font-weight:700;color:#222;font-family:'Liberation Serif',serif;letter-spacing:0.2px">Stand Out from the</div>
 </div>
 <div class="th r3" style="left:318.5px;top:324.8px;background:#0c22ee">
  <svg width="80" height="57" viewBox="0 0 80 57" style="left:0;top:0"><defs><linearGradient id="wg" x1="0.15" y1="0.1" x2="0.7" y2="0.95"><stop offset="0" stop-color="#0c22ee" stop-opacity="0"/><stop offset="0.35" stop-color="#3a3acc" stop-opacity="0.6"/><stop offset="0.7" stop-color="#a07c58"/><stop offset="1" stop-color="#8a6a2c"/></linearGradient></defs><path d="M66 0 L42.5 57 H0 V18 L60 0 Z" fill="url(#wg)"/></svg>
  <div class="t" style="left:6.6px;top:26.6px;font-size:21.5px;font-weight:700;color:#d6d4d0;letter-spacing:0.65px;font-family:'Liberation Serif',serif">unique</div>
 </div>
 <!--/THUMBS-->
 <div class="abs" style="left:0;top:500px;width:481px;height:46px;background:#2e2e2e"></div>
 <div class="abs gb" style="left:269px;top:508.6px">修改要求</div>
 <div class="abs gb" style="left:373px;top:508.6px">再次生成</div>
</div></div>
<!--/RIGHTPANEL-->
<!--TIMELINE-->
<div class="panel" id="tl" style="left:2px;top:591.4px;width:1981px;height:462.6px;border-radius:10px 10px 0 0">
<div class="abs" style="left:0.0px;top:41.6px;width:1982px;height:1.4px;background:#141414;"></div>
<svg style="left:8.0px;top:8.6px" width="24" height="26" viewBox="10 600 24 26"><path d="M17.2 604.6 V618.6 L21.2 616 L24.4 621.2 L27.2 619.4 L24.4 614.4 L29 612.6 Z" fill="none" stroke="#d4d4d4" stroke-width="1.7" stroke-linecap="round" stroke-linejoin="round"/></svg>
<svg style="left:42.0px;top:14.6px" width="18" height="14" viewBox="44 606 18 14"><path d="M48.4 612 L52.4 615.4 L56.4 612" fill="none" stroke="#d4d4d4" stroke-width="2.2" stroke-linecap="round" stroke-linejoin="round"/></svg>
<div class="abs" style="left:72.1px;top:10.8px;width:1.5px;height:19.6px;background:#3a3a3a;"></div>
<svg style="left:88.0px;top:8.6px" width="26" height="26" viewBox="90 600 26 26"><path d="M99.6 604.4 L94.6 608.6 L99.4 613 M95 608.6 H104.7 A5.35 5.35 0 0 1 104.7 619.3 H94.6" fill="none" stroke="#d4d4d4" stroke-width="1.8" stroke-linecap="round" stroke-linejoin="round"/></svg>
<svg style="left:134.0px;top:8.6px" width="26" height="26" viewBox="136 600 26 26"><path d="M150.6 604.4 L155.6 608.6 L150.8 613 M155.2 608.6 H146.2 A5.35 5.35 0 0 0 146.2 619.3 H155.8" fill="none" stroke="#4c4c4c" stroke-width="1.8" stroke-linecap="round" stroke-linejoin="round"/></svg>
<svg style="left:182.0px;top:8.6px" width="24" height="26" viewBox="184 600 24 26"><path d="M187.2 606.9 H190.4 Q191.6 606.9 191.6 608.1 V616.8 Q191.6 618 190.4 618 H187.2" fill="none" stroke="#d4d4d4" stroke-width="2.2" stroke-linecap="butt" stroke-linejoin="round" /><path d="M202.8 606.9 H199.6 Q198.4 606.9 198.4 608.1 V616.8 Q198.4 618 199.6 618 H202.8" fill="none" stroke="#d4d4d4" stroke-width="2.2" stroke-linecap="butt" stroke-linejoin="round" /></svg>
<svg style="left:228.0px;top:8.6px" width="24" height="26" viewBox="230 600 24 26"><path d="M234 606.9 H237.20000000000002 Q238.4 606.9 238.4 608.1 V616.8 Q238.4 618 237.20000000000002 618 H234" fill="none" stroke="#505050" stroke-width="2.2" stroke-linecap="butt" stroke-linejoin="round" stroke-dasharray="2.6 2.2"/><path d="M249.2 606.9 H246.0 Q244.8 606.9 244.8 608.1 V616.8 Q244.8 618 246.0 618 H249.2" fill="none" stroke="#d4d4d4" stroke-width="2.2" stroke-linecap="butt" stroke-linejoin="round" /></svg>
<svg style="left:275.0px;top:8.6px" width="24" height="26" viewBox="277 600 24 26"><path d="M280.4 606.9 H283.6 Q284.8 606.9 284.8 608.1 V616.8 Q284.8 618 283.6 618 H280.4" fill="none" stroke="#d4d4d4" stroke-width="2.2" stroke-linecap="butt" stroke-linejoin="round" /><path d="M295.4 606.9 H292.4 Q291.2 606.9 291.2 608.1 V616.8 Q291.2 618 292.4 618 H295.4" fill="none" stroke="#505050" stroke-width="2.2" stroke-linecap="butt" stroke-linejoin="round" stroke-dasharray="2.6 2.2"/></svg>
<svg style="left:320.0px;top:8.6px" width="26" height="26" viewBox="322 600 26 26"><path d="M326.4 608 H343.4 M331.2 604.5 H338.2 M328.9 608.6 L330 618.6 Q330.2 620.4 332 620.4 H337.6 Q339.4 620.4 339.6 618.6 L340.7 608.6" fill="none" stroke="#d4d4d4" stroke-width="1.8" stroke-linecap="round" stroke-linejoin="round"/></svg>
<svg style="left:368.0px;top:8.6px" width="24" height="26" viewBox="370 600 24 26"><path d="M376.8 605.2 H385.4 Q386.8 605.2 386.8 606.6 V615.2 L381.1 619.8 L375.4 615.2 V606.6 Q375.4 605.2 376.8 605.2 Z" fill="none" stroke="#d4d4d4" stroke-width="1.8" stroke-linecap="round" stroke-linejoin="round"/></svg>
<svg style="left:412.0px;top:6.6px" width="28" height="28" viewBox="414 598 28 28"><path d="M421.4 602.8 V606.4 M418.2 606.4 H433 Q434.6 606.4 434.6 608 V613.8 M421.4 609.8 V617.2 Q421.4 618.8 423 618.8 H437.4 M434.4 618.8 V622.6" fill="none" stroke="#d4d4d4" stroke-width="1.9" stroke-linecap="butt" stroke-linejoin="round"/><path d="M424.8 615.4 L431 609.6" fill="none" stroke="#d4d4d4" stroke-width="1.7" stroke-linecap="butt" stroke-linejoin="round" stroke-dasharray="2.4 1.8"/></svg>
<svg style="left:459.0px;top:8.6px" width="28" height="24" viewBox="461 600 28 24"><path d="M471.7 604 V618.6 H465 Z M476.6 604 V618.6 H483.3 Z" fill="none" stroke="#d4d4d4" stroke-width="1.8" stroke-linecap="round" stroke-linejoin="round"/></svg>
<svg style="left:506.0px;top:8.6px" width="28" height="26" viewBox="508 600 28 26"><path d="M512.2 611.4 L520.6 603.8 L527.2 608.4 M527.4 604.4 V608.6 H523 M529.8 613.2 L521 621 L514.6 616.6 M514.4 620.8 V616.6 H518.8" fill="none" stroke="#d4d4d4" stroke-width="1.8" stroke-linecap="round" stroke-linejoin="round"/></svg>
<div class="abs" style="left:549.5px;top:10.8px;width:1.5px;height:19.6px;background:#3a3a3a;"></div>
<svg style="left:568.0px;top:6.6px" width="28" height="28" viewBox="570 598 28 28"><path d="M579.6 617.6 L587.4 609.4" stroke="#d4d4d4" stroke-width="5" stroke-linecap="round"/><path d="M585.4 611.6 L587 609.9" stroke="#262626" stroke-width="1.3" stroke-linecap="round"/><path d="M577 601.8000000000001 L578.064 604.5360000000001 L580.8 605.6 L578.064 606.664 L577 609.4 L575.936 606.664 L573.2 605.6 L575.936 604.5360000000001 Z" fill="#d4d4d4"/><path d="M592.4 601.4000000000001 L593.184 603.416 L595.1999999999999 604.2 L593.184 604.984 L592.4 607.0 L591.616 604.984 L589.6 604.2 L591.616 603.416 Z" fill="#d4d4d4"/><path d="M590 615.4 L590.896 617.7040000000001 L593.2 618.6 L590.896 619.496 L590 621.8000000000001 L589.104 619.496 L586.8 618.6 L589.104 617.7040000000001 Z" fill="#d4d4d4"/></svg>
<svg style="left:616.0px;top:6.6px" width="28" height="28" viewBox="618 598 28 28"><rect x="622.2" y="604.4" width="3.6" height="3.6" fill="#484848"/><rect x="622.2" y="611" width="3.6" height="3.6" fill="#484848"/><rect x="628.4" y="603.4" width="3" height="2.6" fill="#484848"/><rect x="636.2" y="611" width="3.2" height="3.6" fill="#484848"/><rect x="622.4" y="618.4" width="2.4" height="2.4" fill="#3c3c3c"/><rect x="636.8" y="618.4" width="2.4" height="2.4" fill="#3c3c3c"/><circle cx="630.7" cy="609.7" r="3.5" fill="#d4d4d4"/><path d="M624.2 620.4 Q624.6 615 630.7 615 Q636.9 615 637.3 620.4 Z" fill="#d4d4d4"/><path d="M638.4 602.0 L639.408 604.592 L642.0 605.6 L639.408 606.6080000000001 L638.4 609.2 L637.3919999999999 606.6080000000001 L634.8 605.6 L637.3919999999999 604.592 Z" fill="#d4d4d4"/></svg>
<svg style="left:1414.0px;top:8.6px" width="24" height="26" viewBox="1416 600 24 26"><rect x="1424.2" y="605" width="6.2" height="9.6" rx="3.1" fill="none" stroke="#d4d4d4" stroke-width="1.9" stroke-linecap="round" stroke-linejoin="round"/><path d="M1420.4 612.6 Q1421 618 1427.3 618 Q1433.6 618 1434.2 612.6 M1427.3 618.2 V621.2" fill="none" stroke="#d4d4d4" stroke-width="1.9" stroke-linecap="round" stroke-linejoin="round"/></svg>
<div class="abs" style="left:1456.2px;top:1.0px;width:1.5px;height:19.8px;background:#333;"></div>
<div class="abs" style="left:1473.0px;top:6.0px;width:30.8px;height:30.6px;background:#1c1c1c;border-radius:6px;"></div>
<svg style="left:1474.0px;top:10.6px" width="30" height="20" viewBox="1476 602 30 20"><rect x="1479" y="607.3" width="6.6" height="10.4" rx="1.8" fill="#19bfcd"/><rect x="1493.6" y="607.3" width="8.6" height="10.4" rx="1.8" fill="#19bfcd"/><path d="M1493.6 612.5 H1498" stroke="#1c1c1c" stroke-width="1.7"/><path d="M1488 612.5 H1496.4" stroke="#19bfcd" stroke-width="1.5"/><path d="M1489.8 610 L1487 612.5 L1489.8 615" fill="none" stroke="#19bfcd" stroke-width="1.5" stroke-linejoin="round" stroke-linecap="round"/></svg>
<div class="abs" style="left:1519.7px;top:6.0px;width:30.6px;height:30.6px;background:#1c1c1c;border-radius:6px;"></div>
<svg style="left:1520.0px;top:6.6px" width="30" height="30" viewBox="1522 598 30 30"><rect x="1526" y="607.6" width="22.4" height="9.8" rx="2.6" fill="#19bfcd"/><path d="M1537.2 609.8 V615.2" stroke="#1c1c1c" stroke-width="1.8"/><path d="M1537.2 601.8 V605 M1531.4 603 L1533 605.6 M1543 603 L1541.4 605.6 M1537.2 623.2 V620 M1531.4 622 L1533 619.4 M1543 622 L1541.4 619.4" stroke="#19bfcd" stroke-width="1.6" stroke-linecap="round"/></svg>
<div class="abs" style="left:1566.3px;top:6.0px;width:31px;height:30.6px;background:#1c1c1c;border-radius:6px 0 0 6px;"></div>
<div class="abs" style="left:1598.6px;top:6.0px;width:16px;height:30.6px;background:#161616;border-radius:0 6px 6px 0;"></div>
<svg style="left:1567.0px;top:8.6px" width="30" height="26" viewBox="1569 600 30 26"><path d="M1580.6 609 H1576.4 Q1573.6 609 1573.6 611.8 V613.2 Q1573.6 616 1576.4 616 H1580.6 M1586 609 H1590.4 Q1593.2 609 1593.2 611.8 V613.2 Q1593.2 616 1590.4 616 H1586" fill="none" stroke="#19bfcd" stroke-width="3.2"/><path d="M1578.6 612.5 H1588.2" stroke="#19bfcd" stroke-width="2.4"/></svg>
<svg style="left:1598.0px;top:12.6px" width="16" height="16" viewBox="1600 604 16 16"><path d="M1604.6 610.6 L1608.6 614 L1612.6 610.6" fill="none" stroke="#e0e0e0" stroke-width="2.2" stroke-linecap="round" stroke-linejoin="round"/></svg>
<svg style="left:1630.0px;top:8.6px" width="32" height="26" viewBox="1632 600 32 26"><path d="M1646.2 607.8 H1637.3 V616.8 H1646.2 M1648.7 604.2 V620.8 M1651.4 607.8 H1656.6 Q1658.4 607.8 1658.4 609.6 V613.6" fill="none" stroke="#d4d4d4" stroke-width="1.8" stroke-linecap="butt" stroke-linejoin="round"/><path d="M1651.4 613.8 L1651.6 621.6 L1653.6 619.8 L1655.6 623.4 L1657.4 622.4 L1655.4 619 L1658.2 618.6 Z" fill="#d4d4d4"/></svg>
<svg style="left:1664.0px;top:12.6px" width="18" height="16" viewBox="1666 604 18 16"><path d="M1670.2 610.4 L1674.2 613.8 L1678.2 610.4" fill="none" stroke="#d4d4d4" stroke-width="2.2" stroke-linecap="round" stroke-linejoin="round"/></svg>
<div class="abs" style="left:1695.4px;top:1.0px;width:1.5px;height:19.8px;background:#333;"></div>
<svg style="left:1712.0px;top:8.6px" width="32" height="26" viewBox="1714 600 32 26"><path d="M1725 615.4 H1721.2 Q1719.6 615.4 1719.6 613.8 V607 Q1719.6 605.6 1721.2 605.6 H1738.8 Q1740.4 605.6 1740.4 607 V613.8 Q1740.4 615.4 1738.8 615.4 H1738" fill="none" stroke="#d4d4d4" stroke-width="1.8" stroke-linecap="round" stroke-linejoin="round"/><path d="M1723.8 606 V609.4 M1728.2 606 V608.6 M1732.6 606 V608.6 M1736.8 606 V609.4" stroke="#d4d4d4" stroke-width="1.5"/><circle cx="1730.2" cy="615.4" r="3.2" fill="none" stroke="#d4d4d4" stroke-width="1.7" stroke-linecap="round" stroke-linejoin="round"/><path d="M1732.8 618 L1734.8 620" fill="none" stroke="#d4d4d4" stroke-width="1.8" stroke-linecap="round" stroke-linejoin="round"/></svg>
<svg style="left:1762.0px;top:8.6px" width="26" height="26" viewBox="1764 600 26 26"><circle cx="1776.4" cy="612.3" r="7.4" fill="none" stroke="#d4d4d4" stroke-width="1.8" stroke-linecap="round" stroke-linejoin="round"/><path d="M1773 612.3 H1779.6 M1782 618 L1784.4 620.4" fill="none" stroke="#d4d4d4" stroke-width="1.8" stroke-linecap="round" stroke-linejoin="round"/></svg>
<svg style="left:1948.0px;top:8.6px" width="26" height="26" viewBox="1950 600 26 26"><circle cx="1962.4" cy="612.3" r="7.4" fill="none" stroke="#d4d4d4" stroke-width="1.8" stroke-linecap="round" stroke-linejoin="round"/><path d="M1959 612.3 H1965.8 M1962.4 608.9 V615.7 M1968 618 L1970.4 620.4" fill="none" stroke="#d4d4d4" stroke-width="1.8" stroke-linecap="round" stroke-linejoin="round"/></svg>
<div class="abs" style="left:1827.0px;top:19.9px;width:103px;height:2.4px;background:#0c0c0c;"></div>
<div class="abs" style="left:1806.0px;top:20.0px;width:22px;height:2.2px;background:#ececec;"></div>
<div class="abs" style="left:1822.2px;top:12.8px;width:10px;height:16px;background:#f2f2f2;border-radius:5px;"></div>
<div class="abs" style="left:226.0px;top:43.0px;width:617.5px;height:1.4px;background:#4c3f17;"></div>
<div class="abs" style="left:225.2px;top:47.6px;width:1.6px;height:13.4px;background:#5c5c5c;"></div>
<div class="t" style="left:230.6px;top:47.8px;font-size:13.5px;color:#5e5e5e;letter-spacing:0.7px">00:00</div>
<div class="abs" style="left:266.7px;top:47.2px;width:1px;height:4.6px;background:#484848;"></div>
<div class="abs" style="left:287.3px;top:47.6px;width:1.1px;height:7px;background:#3f3f3f;"></div>
<div class="abs" style="left:307.8px;top:47.6px;width:1.1px;height:7px;background:#3f3f3f;"></div>
<div class="abs" style="left:328.4px;top:47.6px;width:1.1px;height:7px;background:#3f3f3f;"></div>
<div class="abs" style="left:349.0px;top:47.6px;width:1.1px;height:7px;background:#3f3f3f;"></div>
<div class="abs" style="left:369.6px;top:47.6px;width:1.1px;height:7px;background:#3f3f3f;"></div>
<div class="abs" style="left:390.2px;top:47.6px;width:1.1px;height:7px;background:#3f3f3f;"></div>
<div class="abs" style="left:410.8px;top:47.6px;width:1.1px;height:7px;background:#3f3f3f;"></div>
<div class="abs" style="left:431.1px;top:47.6px;width:1.6px;height:13.4px;background:#5c5c5c;"></div>
<div class="t" style="left:436.5px;top:47.8px;font-size:13.5px;color:#5e5e5e;letter-spacing:0.7px">00:01</div>
<div class="abs" style="left:472.6px;top:47.2px;width:1px;height:4.6px;background:#484848;"></div>
<div class="abs" style="left:493.1px;top:47.6px;width:1.1px;height:7px;background:#3f3f3f;"></div>
<div class="abs" style="left:513.7px;top:47.6px;width:1.1px;height:7px;background:#3f3f3f;"></div>
<div class="abs" style="left:534.3px;top:47.6px;width:1.1px;height:7px;background:#3f3f3f;"></div>
<div class="abs" style="left:554.9px;top:47.6px;width:1.1px;height:7px;background:#3f3f3f;"></div>
<div class="abs" style="left:575.4px;top:47.6px;width:1.1px;height:7px;background:#3f3f3f;"></div>
<div class="abs" style="left:596.0px;top:47.6px;width:1.1px;height:7px;background:#3f3f3f;"></div>
<div class="abs" style="left:616.6px;top:47.6px;width:1.1px;height:7px;background:#3f3f3f;"></div>
<div class="abs" style="left:636.9px;top:47.6px;width:1.6px;height:13.4px;background:#5c5c5c;"></div>
<div class="t" style="left:642.3px;top:47.8px;font-size:13.5px;color:#5e5e5e;letter-spacing:0.7px">00:02</div>
<div class="abs" style="left:678.4px;top:47.2px;width:1px;height:4.6px;background:#484848;"></div>
<div class="abs" style="left:699.0px;top:47.6px;width:1.1px;height:7px;background:#3f3f3f;"></div>
<div class="abs" style="left:719.5px;top:47.6px;width:1.1px;height:7px;background:#3f3f3f;"></div>
<div class="abs" style="left:740.1px;top:47.6px;width:1.1px;height:7px;background:#3f3f3f;"></div>
<div class="abs" style="left:760.7px;top:47.6px;width:1.1px;height:7px;background:#3f3f3f;"></div>
<div class="abs" style="left:781.3px;top:47.6px;width:1.1px;height:7px;background:#3f3f3f;"></div>
<div class="abs" style="left:801.9px;top:47.6px;width:1.1px;height:7px;background:#3f3f3f;"></div>
<div class="abs" style="left:822.5px;top:47.6px;width:1.1px;height:7px;background:#3f3f3f;"></div>
<div class="abs" style="left:842.8px;top:47.6px;width:1.6px;height:13.4px;background:#5c5c5c;"></div>
<div class="t" style="left:848.1px;top:47.8px;font-size:13.5px;color:#5e5e5e;letter-spacing:0.7px">00:03</div>
<div class="abs" style="left:884.2px;top:47.2px;width:1px;height:4.6px;background:#484848;"></div>
<div class="abs" style="left:904.8px;top:47.6px;width:1.1px;height:7px;background:#3f3f3f;"></div>
<div class="abs" style="left:925.4px;top:47.6px;width:1.1px;height:7px;background:#3f3f3f;"></div>
<div class="abs" style="left:946.0px;top:47.6px;width:1.1px;height:7px;background:#3f3f3f;"></div>
<div class="abs" style="left:966.6px;top:47.6px;width:1.1px;height:7px;background:#3f3f3f;"></div>
<div class="abs" style="left:987.1px;top:47.6px;width:1.1px;height:7px;background:#3f3f3f;"></div>
<div class="abs" style="left:1007.7px;top:47.6px;width:1.1px;height:7px;background:#3f3f3f;"></div>
<div class="abs" style="left:1028.3px;top:47.6px;width:1.1px;height:7px;background:#3f3f3f;"></div>
<div class="abs" style="left:1048.6px;top:47.6px;width:1.6px;height:13.4px;background:#5c5c5c;"></div>
<div class="t" style="left:1054.0px;top:47.8px;font-size:13.5px;color:#5e5e5e;letter-spacing:0.7px">00:04</div>
<div class="abs" style="left:1090.1px;top:47.2px;width:1px;height:4.6px;background:#484848;"></div>
<div class="abs" style="left:1110.7px;top:47.6px;width:1.1px;height:7px;background:#3f3f3f;"></div>
<div class="abs" style="left:1131.2px;top:47.6px;width:1.1px;height:7px;background:#3f3f3f;"></div>
<div class="abs" style="left:1151.8px;top:47.6px;width:1.1px;height:7px;background:#3f3f3f;"></div>
<div class="abs" style="left:1172.4px;top:47.6px;width:1.1px;height:7px;background:#3f3f3f;"></div>
<div class="abs" style="left:1193.0px;top:47.6px;width:1.1px;height:7px;background:#3f3f3f;"></div>
<div class="abs" style="left:1213.6px;top:47.6px;width:1.1px;height:7px;background:#3f3f3f;"></div>
<div class="abs" style="left:1234.2px;top:47.6px;width:1.1px;height:7px;background:#3f3f3f;"></div>
<div class="abs" style="left:1254.5px;top:47.6px;width:1.6px;height:13.4px;background:#5c5c5c;"></div>
<div class="t" style="left:1259.8px;top:47.8px;font-size:13.5px;color:#5e5e5e;letter-spacing:0.7px">00:05</div>
<div class="abs" style="left:1296.0px;top:47.2px;width:1px;height:4.6px;background:#484848;"></div>
<div class="abs" style="left:1316.5px;top:47.6px;width:1.1px;height:7px;background:#3f3f3f;"></div>
<div class="abs" style="left:1337.1px;top:47.6px;width:1.1px;height:7px;background:#3f3f3f;"></div>
<div class="abs" style="left:1357.7px;top:47.6px;width:1.1px;height:7px;background:#3f3f3f;"></div>
<div class="abs" style="left:1378.3px;top:47.6px;width:1.1px;height:7px;background:#3f3f3f;"></div>
<div class="abs" style="left:1398.8px;top:47.6px;width:1.1px;height:7px;background:#3f3f3f;"></div>
<div class="abs" style="left:1419.4px;top:47.6px;width:1.1px;height:7px;background:#3f3f3f;"></div>
<div class="abs" style="left:1440.0px;top:47.6px;width:1.1px;height:7px;background:#3f3f3f;"></div>
<div class="abs" style="left:1460.3px;top:47.6px;width:1.6px;height:13.4px;background:#5c5c5c;"></div>
<div class="t" style="left:1465.7px;top:47.8px;font-size:13.5px;color:#5e5e5e;letter-spacing:0.7px">00:06</div>
<div class="abs" style="left:1501.8px;top:47.2px;width:1px;height:4.6px;background:#484848;"></div>
<div class="abs" style="left:1522.4px;top:47.6px;width:1.1px;height:7px;background:#3f3f3f;"></div>
<div class="abs" style="left:1542.9px;top:47.6px;width:1.1px;height:7px;background:#3f3f3f;"></div>
<div class="abs" style="left:1563.5px;top:47.6px;width:1.1px;height:7px;background:#3f3f3f;"></div>
<div class="abs" style="left:1584.1px;top:47.6px;width:1.1px;height:7px;background:#3f3f3f;"></div>
<div class="abs" style="left:1604.7px;top:47.6px;width:1.1px;height:7px;background:#3f3f3f;"></div>
<div class="abs" style="left:1625.3px;top:47.6px;width:1.1px;height:7px;background:#3f3f3f;"></div>
<div class="abs" style="left:1645.9px;top:47.6px;width:1.1px;height:7px;background:#3f3f3f;"></div>
<div class="abs" style="left:1666.2px;top:47.6px;width:1.6px;height:13.4px;background:#5c5c5c;"></div>
<div class="t" style="left:1671.5px;top:47.8px;font-size:13.5px;color:#5e5e5e;letter-spacing:0.7px">00:07</div>
<div class="abs" style="left:1707.7px;top:47.2px;width:1px;height:4.6px;background:#484848;"></div>
<div class="abs" style="left:1728.2px;top:47.6px;width:1.1px;height:7px;background:#3f3f3f;"></div>
<div class="abs" style="left:1748.8px;top:47.6px;width:1.1px;height:7px;background:#3f3f3f;"></div>
<div class="abs" style="left:1769.4px;top:47.6px;width:1.1px;height:7px;background:#3f3f3f;"></div>
<div class="abs" style="left:1790.0px;top:47.6px;width:1.1px;height:7px;background:#3f3f3f;"></div>
<div class="abs" style="left:1810.5px;top:47.6px;width:1.1px;height:7px;background:#3f3f3f;"></div>
<div class="abs" style="left:1831.1px;top:47.6px;width:1.1px;height:7px;background:#3f3f3f;"></div>
<div class="abs" style="left:1851.7px;top:47.6px;width:1.1px;height:7px;background:#3f3f3f;"></div>
<div class="abs" style="left:1872.0px;top:47.6px;width:1.6px;height:13.4px;background:#5c5c5c;"></div>
<div class="t" style="left:1877.4px;top:47.8px;font-size:13.5px;color:#5e5e5e;letter-spacing:0.7px">00:08</div>
<div class="abs" style="left:1913.5px;top:47.2px;width:1px;height:4.6px;background:#484848;"></div>
<div class="abs" style="left:1934.1px;top:47.6px;width:1.1px;height:7px;background:#3f3f3f;"></div>
<div class="abs" style="left:1954.6px;top:47.6px;width:1.1px;height:7px;background:#3f3f3f;"></div>
<div class="abs" style="left:1975.2px;top:47.6px;width:1.1px;height:7px;background:#3f3f3f;"></div>
<div class="abs" style="left:159.2px;top:78.6px;width:1.5px;height:384px;background:#1a1a1a;"></div>
<div class="abs" style="left:0.0px;top:213.3px;width:1982px;height:99.5px;background:#2f2f2f;border-top:1.6px solid #373737;border-bottom:1.6px solid #363636;"></div>
<div class="abs" style="left:159.2px;top:213.3px;width:1.5px;height:99.5px;background:#1d1d1d;"></div>
<svg style="left:8.0px;top:252.6px" width="22" height="20" viewBox="10 844 22 20"><rect x="12.6" y="847.6" width="15" height="12.6" rx="1" fill="none" stroke="#5a5a5a" stroke-width="1.3"/><path d="M18.4 851.4 L22.6 853.9 L18.4 856.4 Z" fill="#5a5a5a"/></svg>
<svg style="left:40.0px;top:252.6px" width="20" height="20" viewBox="42 844 20 20"><rect x="46.6" y="853" width="9.6" height="6.6" rx="1.2" fill="none" stroke="#cfcfcf" stroke-width="1.7" stroke-linecap="round" stroke-linejoin="round"/><path d="M48.6 852.8 V850.8 A2.6 2.6 0 0 1 53.6 849.8" fill="none" stroke="#cfcfcf" stroke-width="1.6" stroke-linecap="round" stroke-linejoin="round"/></svg>
<svg style="left:70.0px;top:252.6px" width="22" height="20" viewBox="72 844 22 20"><path d="M75.2 854 Q82.2 846.2 89.2 854 Q82.2 861.8 75.2 854 Z" fill="none" stroke="#cfcfcf" stroke-width="1.5" stroke-linecap="round" stroke-linejoin="round"/><circle cx="82.2" cy="854" r="2.3" fill="none" stroke="#cfcfcf" stroke-width="1.5" stroke-linecap="round" stroke-linejoin="round"/></svg>
<svg style="left:102.0px;top:252.6px" width="22" height="20" viewBox="104 844 22 20"><path d="M106.8 852 H109 L112.8 849 V859 L109 856 H106.8 Z" fill="none" stroke="#cfcfcf" stroke-width="1.5" stroke-linecap="round" stroke-linejoin="round"/><path d="M115.6 852 V856 M118 850 Q120.4 854 118 858" fill="none" stroke="#cfcfcf" stroke-width="1.5" stroke-linecap="round" stroke-linejoin="round"/></svg>
<div class="abs" style="left:136.6px;top:261.2px;width:2.6px;height:2.6px;border-radius:50%;background:#cfcfcf;box-shadow:4.9px 0 0 #cfcfcf,9.8px 0 0 #cfcfcf"></div>
<div class="abs" style="left:165.6px;top:238.8px;width:49.2px;height:48.6px;background:#3a3a3a;border:1px dashed #555;border-radius:7px;"></div>
<svg style="left:180.0px;top:244.6px" width="22" height="20" viewBox="182 836 22 20"><path d="M188.4 847.6 L195 840.6 Q195.8 839.8 196.6 840.6 L198 842 Q198.8 842.8 198 843.6 L191.4 850.4 L188 850.8 Z" fill="none" stroke="#dadada" stroke-width="1.6" stroke-linecap="round" stroke-linejoin="round"/><path d="M186.8 853 H197.6" fill="none" stroke="#dadada" stroke-width="1.6" stroke-linecap="round" stroke-linejoin="round"/></svg>
<div class="t" style="left:177.1px;top:266.0px;font-size:13.1px;color:#d4d4d4">封面</div>
<div class="abs" style="left:221.4px;top:216.2px;width:624.6px;height:93.1px;background:#fff;border-radius:5px;"></div>
<div class="abs" style="left:225.4px;top:218.4px;width:616.8px;height:88.8px;background:#00535b;border-radius:1.5px;"></div>
<div class="abs" style="left:225.8px;top:239.6px;width:615.8px;height:49px;background:#fff;"></div>
<div class="abs" style="left:225.4px;top:299.4px;width:616.8px;height:1.1px;background:#2c7c84;"></div>
<div class="abs" style="left:231.1px;top:219.9px;width:17px;height:16.5px;background:#1a676f;border-radius:3px;"></div>
<svg style="left:232.0px;top:220.6px" width="16" height="16" viewBox="234 812 16 16"><path d="M241.6 813.6 Q242.4 818.6 247.6 819.6 Q242.4 820.6 241.6 825.6 Q240.8 820.6 235.6 819.6 Q240.8 818.6 241.6 813.6 Z" fill="none" stroke="#fff" stroke-width="1.6" stroke-linejoin="round"/></svg>
<div class="abs" style="left:251.5px;top:219.9px;width:45.7px;height:16.5px;background:#1a676f;border-radius:3px;"></div>
<div class="t" style="left:254.39999999999998px;top:221.8px;font-size:12.9px;color:#d2e6e8">AI 生成</div>
<div class="abs" style="left:303.1px;top:219.6px;width:80.6px;height:17px;background:#1a676f;border-radius:3px;"></div>
<div class="t" style="left:306.2px;top:220.4px;font-size:12.6px;color:#c8e0e2;letter-spacing:0.84px">00:00:03:00</div>
<div class="abs" style="left:839.4px;top:258.6px;width:1.2px;height:13px;background:#333;"></div>
<svg style="left:836.0px;top:268.6px" width="8" height="12" viewBox="838 860 8 12"><path d="M841.2 862 L843.4 865.6 L841.2 869.4 Z" fill="#111"/></svg>
<div class="abs" style="left:615.4px;top:44.6px;width:1.7px;height:397.6px;background:#c6c6c6;"></div>
<svg style="left:606.0px;top:38.6px" width="22" height="26" viewBox="608 630 22 26"><path d="M613 635.6 H624 V646.6 Q624 651.4 618.5 651.4 Q613 651.4 613 646.6 Z" fill="#262626" stroke="#fff" stroke-width="2.2" stroke-linejoin="round"/><path d="M618.3 639.4 V647.6" stroke="#444" stroke-width="1.5"/></svg>
<div class="abs" style="left:163.6px;top:450.1px;width:1807px;height:9.3px;background:#3f3f3f;border-radius:4.6px;"></div>
</div>
<!--/TIMELINE-->
<div class="abs" style="left:0;top:1051.4px;width:1986px;height:3px;background:#0f0f0f"></div>
<div class="abs" style="left:0;top:1054.2px;width:1986px;height:10px;background:linear-gradient(90deg,#dedae2 0%,#e7d8e0 18%,#e2dce4 35%,#ead9e1 52%,#dedcea 64%,#dcdce6 80%,#dadae0 100%)"></div>
<div class="abs" style="left:1445px;top:1060.6px;width:105px;height:6px;background:#f3f3f3;border-radius:3px"></div>
</div></div>
</body>
</html>
